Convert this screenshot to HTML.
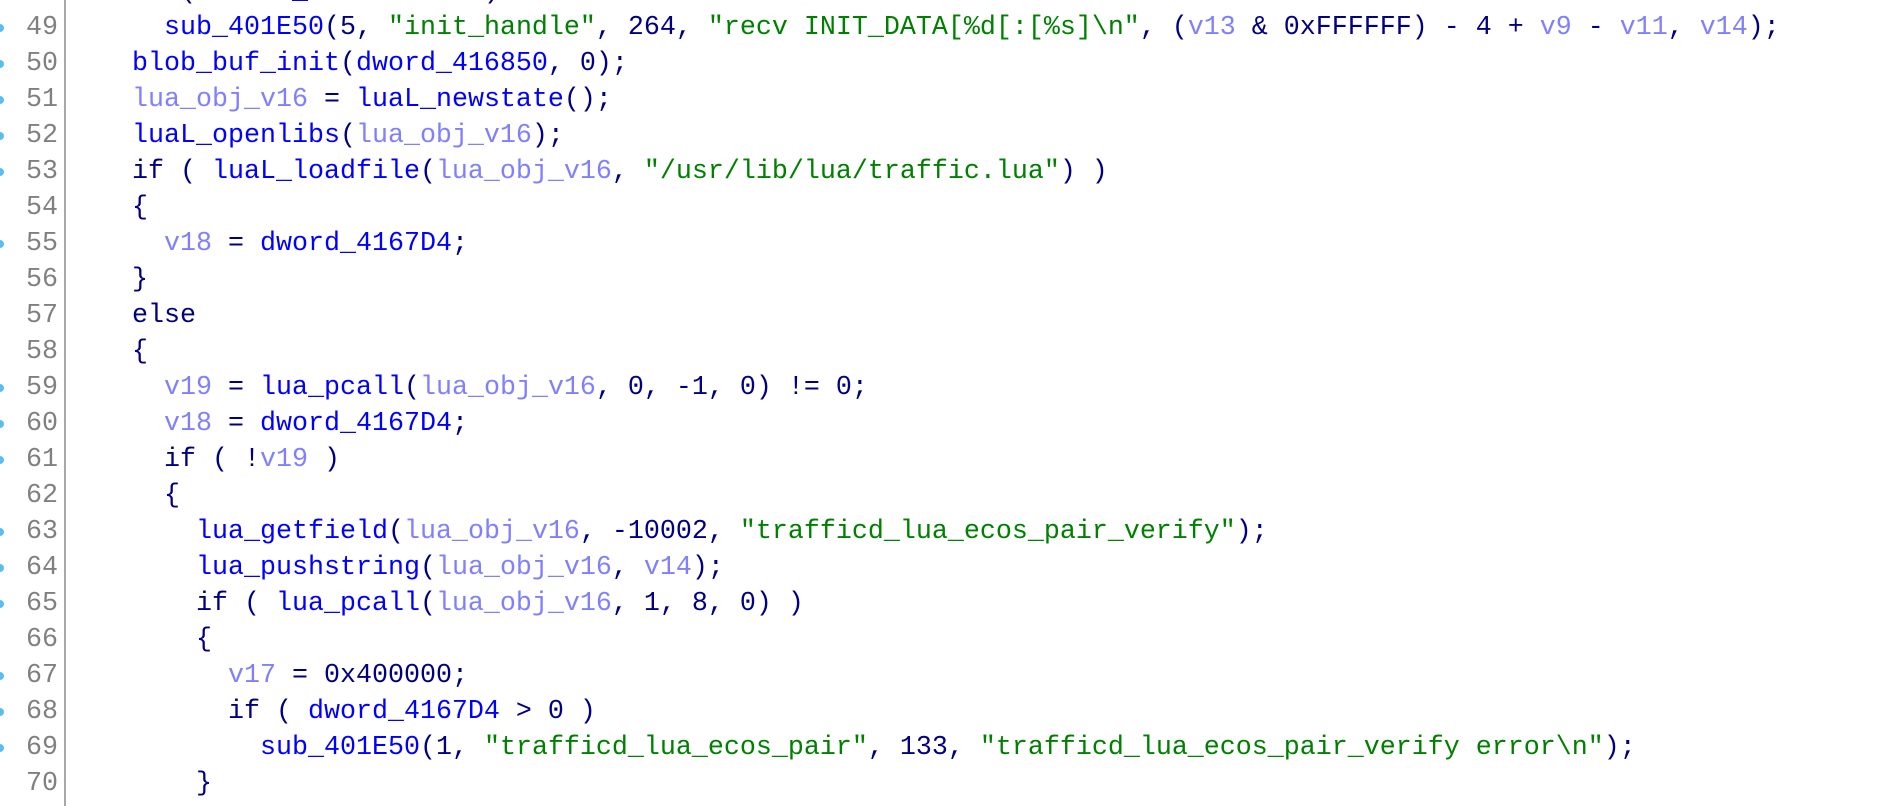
<!DOCTYPE html>
<html><head><meta charset="utf-8"><style>
html,body{margin:0;padding:0;background:#fff;width:1885px;height:806px;overflow:hidden}
.wrap{position:absolute;top:-25.7px;left:0;font-family:"Liberation Mono",monospace;font-size:26.67px;line-height:36px}
.ln{position:absolute;left:0;width:58px;text-align:right;color:#808080;white-space:pre}
.code{position:absolute;left:132px;white-space:pre;color:#000080}
.gut{position:absolute;left:64px;top:0;width:2px;height:806px;background:#a8a8a8}
.dot{position:absolute;left:-4px;width:8px;height:8px;border-radius:50%;background:#5cbcf0}
.f{color:#0000ff}.v{color:#8080ff}.s{color:#008000}
</style></head><body>
<div class="gut"></div>
<div class="wrap">
<div class="ln">48
49
50
51
52
53
54
55
56
57
58
59
60
61
62
63
64
65
66
67
68
69
70</div>
<div class="code">if ( <span class="f">dword_4167D4</span> &gt; 3 )
  <span class="f">sub_401E50</span>(5, <span class="s">"init_handle"</span>, 264, <span class="s">"recv INIT_DATA[%d[:[%s]\n"</span>, (<span class="v">v13</span> &amp; 0xFFFFFF) - 4 + <span class="v">v9</span> - <span class="v">v11</span>, <span class="v">v14</span>);
<span class="f">blob_buf_init</span>(<span class="f">dword_416850</span>, 0);
<span class="v">lua_obj_v16</span> = <span class="f">luaL_newstate</span>();
<span class="f">luaL_openlibs</span>(<span class="v">lua_obj_v16</span>);
if ( <span class="f">luaL_loadfile</span>(<span class="v">lua_obj_v16</span>, <span class="s">"/usr/lib/lua/traffic.lua"</span>) )
{
  <span class="v">v18</span> = <span class="f">dword_4167D4</span>;
}
else
{
  <span class="v">v19</span> = <span class="f">lua_pcall</span>(<span class="v">lua_obj_v16</span>, 0, -1, 0) != 0;
  <span class="v">v18</span> = <span class="f">dword_4167D4</span>;
  if ( !<span class="v">v19</span> )
  {
    <span class="f">lua_getfield</span>(<span class="v">lua_obj_v16</span>, -10002, <span class="s">"trafficd_lua_ecos_pair_verify"</span>);
    <span class="f">lua_pushstring</span>(<span class="v">lua_obj_v16</span>, <span class="v">v14</span>);
    if ( <span class="f">lua_pcall</span>(<span class="v">lua_obj_v16</span>, 1, 8, 0) )
    {
      <span class="v">v17</span> = 0x400000;
      if ( <span class="f">dword_4167D4</span> &gt; 0 )
        <span class="f">sub_401E50</span>(1, <span class="s">"trafficd_lua_ecos_pair"</span>, 133, <span class="s">"trafficd_lua_ecos_pair_verify error\n"</span>);
    }
</div>
</div>
<div class="dot" style="top:24px"></div>
<div class="dot" style="top:60px"></div>
<div class="dot" style="top:96px"></div>
<div class="dot" style="top:132px"></div>
<div class="dot" style="top:168px"></div>
<div class="dot" style="top:240px"></div>
<div class="dot" style="top:384px"></div>
<div class="dot" style="top:420px"></div>
<div class="dot" style="top:456px"></div>
<div class="dot" style="top:528px"></div>
<div class="dot" style="top:564px"></div>
<div class="dot" style="top:600px"></div>
<div class="dot" style="top:672px"></div>
<div class="dot" style="top:708px"></div>
<div class="dot" style="top:744px"></div>
</body></html>
